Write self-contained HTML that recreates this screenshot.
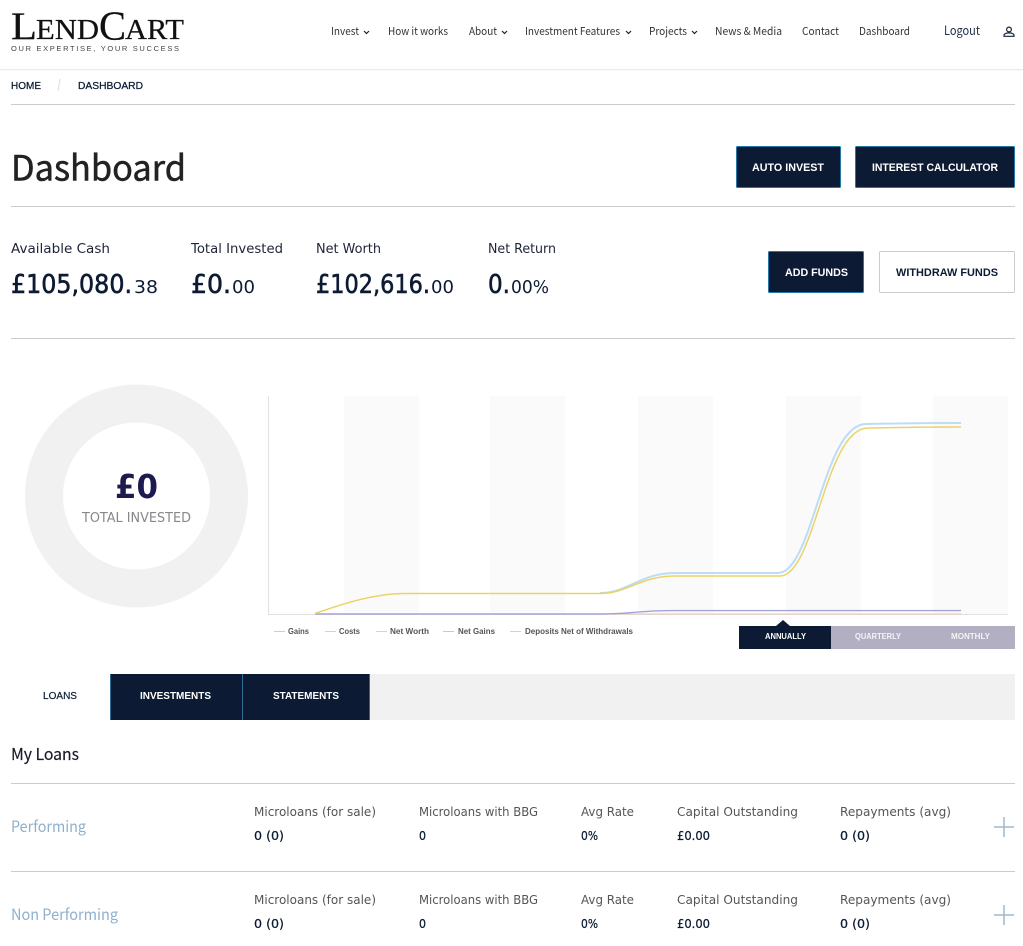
<!DOCTYPE html>
<html lang="en"><head><meta charset="utf-8"><title>Dashboard</title>
<style>
html,body{margin:0;padding:0;background:#fff;width:1023px;height:946px;overflow:hidden}
svg{display:block}
text{font-family:"Liberation Sans",sans-serif;white-space:pre}
.os{font-family:"Noto Sans CJK JP","Liberation Sans",sans-serif}
.pp{font-family:"DejaVu Sans","Liberation Sans",sans-serif}
.nav{font-size:11px;fill:#333;font-family:"Noto Sans CJK JP","Liberation Sans",sans-serif}
.lbl{font-size:13px;fill:#1c2436;font-family:"DejaVu Sans","Liberation Sans",sans-serif}
.val{font-size:26px;fill:#0c1b33;stroke:#0c1b33;stroke-width:.6;font-family:"DejaVu Sans","Liberation Sans",sans-serif}
.sm{font-size:18px;fill:#0c1b33;font-family:"DejaVu Sans","Liberation Sans",sans-serif}
.btn{font-size:11px;font-weight:700;fill:#fff}
.col{font-size:12px;fill:#555;font-family:"DejaVu Sans","Liberation Sans",sans-serif}
.cv{font-size:12px;fill:#0c1b33;stroke:#0c1b33;stroke-width:.25;font-family:"DejaVu Sans","Liberation Sans",sans-serif}
.leg{font-size:8px;fill:#555;font-weight:700}
.perf{font-size:15.5px;fill:#8eb0cc;font-family:"Noto Sans CJK JP","Liberation Sans",sans-serif}
.logo{font-family:"Liberation Serif",serif;fill:#111;stroke:#111;stroke-width:.25}
</style></head><body>
<svg width="1023" height="946" viewBox="0 0 1023 946" xmlns="http://www.w3.org/2000/svg">
<rect width="1023" height="946" fill="#fff"/>
<rect y="69" width="1023" height="1" fill="#ececec"/>
<rect y="70" width="1023" height="1" fill="#f7f7f7"/>

<!-- logo -->
<text class="logo" x="11" y="39" font-size="39" textLength="26" lengthAdjust="spacingAndGlyphs">L</text>
<text class="logo" x="36" y="39" font-size="29" textLength="63" lengthAdjust="spacingAndGlyphs">END</text>
<text class="logo" x="99" y="39.500" font-size="41" textLength="27" lengthAdjust="spacingAndGlyphs">C</text>
<text class="logo" x="125" y="39" font-size="29" textLength="59" lengthAdjust="spacingAndGlyphs">ART</text>
<text x="11" y="51" font-size="7.500" fill="#444" textLength="168" lengthAdjust="spacing">OUR EXPERTISE, YOUR SUCCESS</text>

<!-- nav -->
<text class="nav" x="331" y="35" textLength="28" lengthAdjust="spacingAndGlyphs">Invest</text>
<text class="nav" x="388" y="35" textLength="60" lengthAdjust="spacingAndGlyphs">How it works</text>
<text class="nav" x="469" y="35" textLength="28" lengthAdjust="spacingAndGlyphs">About</text>
<text class="nav" x="525" y="35" textLength="95" lengthAdjust="spacingAndGlyphs">Investment Features</text>
<text class="nav" x="649" y="35" textLength="38" lengthAdjust="spacingAndGlyphs">Projects</text>
<text class="nav" x="715" y="35" textLength="67" lengthAdjust="spacingAndGlyphs">News &amp; Media</text>
<text class="nav" x="802" y="35" textLength="37" lengthAdjust="spacingAndGlyphs">Contact</text>
<text class="nav" x="859" y="35" textLength="51" lengthAdjust="spacingAndGlyphs">Dashboard</text>
<text class="os" x="944" y="35" font-size="12.500" fill="#1f2d45" textLength="36" lengthAdjust="spacingAndGlyphs">Logout</text>
<g fill="none" stroke="#222" stroke-width="1.2">
<path d="M364 31l2.500 2.500 2.500-2.500M502 31l2.500 2.500 2.500-2.500M626 31l2.500 2.500 2.500-2.500M692 31l2.500 2.500 2.500-2.500"/>
</g>
<g fill="none" stroke="#14213a" stroke-width="1.2">
<circle cx="1009" cy="29.500" r="2.400"/>
<path d="M1004 36.300v-1c0-1.600 2.500-2.400 5-2.400s5 .8 5 2.400v1z"/>
</g>

<!-- breadcrumb -->
<text x="11" y="89" font-size="10.500" fill="#0c1b33" stroke="#0c1b33" stroke-width=".25" textLength="30" lengthAdjust="spacingAndGlyphs">HOME</text>
<path d="M60 79l-2 12" stroke="#ddd" fill="none"/>
<text x="78" y="89" font-size="10.500" fill="#0c1b33" stroke="#0c1b33" stroke-width=".25" textLength="65" lengthAdjust="spacingAndGlyphs">DASHBOARD</text>
<rect x="11" y="104" width="1004" height="1" fill="#ccc"/>

<!-- title -->
<text class="os" x="11" y="180.500" font-size="35" fill="#222" stroke="#222" stroke-width=".5" textLength="175" lengthAdjust="spacingAndGlyphs">Dashboard</text>
<rect x="736.500" y="146.500" width="104" height="41" rx="1" fill="#0c1b33" stroke="#2478a8"/>
<text class="btn" x="752" y="171" textLength="72" lengthAdjust="spacingAndGlyphs">AUTO INVEST</text>
<rect x="855.500" y="146.500" width="159" height="41" rx="1" fill="#0c1b33" stroke="#2478a8"/>
<text class="btn" x="872" y="171" textLength="126" lengthAdjust="spacingAndGlyphs">INTEREST CALCULATOR</text>
<rect x="11" y="206" width="1004" height="1" fill="#ccc"/>

<!-- stats -->
<text class="lbl" x="11" y="253" textLength="99" lengthAdjust="spacingAndGlyphs">Available Cash</text>
<text class="lbl" x="191" y="253" textLength="92" lengthAdjust="spacingAndGlyphs">Total Invested</text>
<text class="lbl" x="316" y="253" textLength="65" lengthAdjust="spacingAndGlyphs">Net Worth</text>
<text class="lbl" x="488" y="253" textLength="68" lengthAdjust="spacingAndGlyphs">Net Return</text>
<text class="val" x="11" y="293" textLength="121" lengthAdjust="spacingAndGlyphs">£105,080.</text>
<text class="sm" x="134" y="293" textLength="24" lengthAdjust="spacingAndGlyphs">38</text>
<text class="val" x="191" y="293" textLength="40" lengthAdjust="spacingAndGlyphs">£0.</text>
<text class="sm" x="232" y="293" textLength="23" lengthAdjust="spacingAndGlyphs">00</text>
<text class="val" x="316" y="293" textLength="114" lengthAdjust="spacingAndGlyphs">£102,616.</text>
<text class="sm" x="431" y="293" textLength="23" lengthAdjust="spacingAndGlyphs">00</text>
<text class="val" x="488" y="293" textLength="22" lengthAdjust="spacingAndGlyphs">0.</text>
<text class="sm" x="511" y="293" textLength="38" lengthAdjust="spacingAndGlyphs">00%</text>
<rect x="768.500" y="251.500" width="95" height="41" rx="1" fill="#0c1b33" stroke="#2478a8"/>
<text class="btn" x="785" y="276" textLength="63" lengthAdjust="spacingAndGlyphs">ADD FUNDS</text>
<rect x="879.500" y="251.500" width="135" height="41" rx="1" fill="#fff" stroke="#ccc"/>
<text class="btn" x="896" y="276" style="fill:#0c1b33" textLength="102" lengthAdjust="spacingAndGlyphs">WITHDRAW FUNDS</text>
<rect x="11" y="338" width="1004" height="1" fill="#ccc"/>

<!-- donut -->
<circle cx="136.500" cy="496" r="92.500" fill="none" stroke="#f1f1f1" stroke-width="38"/>
<text class="pp" x="115" y="498" font-size="33" font-weight="700" fill="#1d1a50" textLength="43" lengthAdjust="spacingAndGlyphs">£0</text>
<text class="pp" x="82" y="522" font-size="13" fill="#888" textLength="109" lengthAdjust="spacingAndGlyphs">TOTAL INVESTED</text>

<!-- chart -->
<g fill="#fafafa">
<rect x="344" y="396" width="75" height="218"/>
<rect x="490" y="396" width="75" height="218"/>
<rect x="638" y="396" width="75" height="218"/>
<rect x="786" y="396" width="75" height="218"/>
<rect x="933" y="396" width="75" height="218"/>
</g>
<rect x="268" y="396" width="1" height="219" fill="#e2e2e2"/>
<rect x="268" y="614" width="740" height="1" fill="#e4e0e2"/>
<g fill="none">
<path d="M315 614H961" stroke="#eec4ba" stroke-width="1"/>
<path d="M315 614H600C630 614 640 610.600 672 610.600H961" stroke="#a2a6d6" stroke-width="1.400"/>
<path d="M600 593C628 593 640 573 675 573H778C813 573 823 424 866 424C890 423.500 930 423 961 423" stroke="#bcdcf8" stroke-width="2"/>
<path d="M315 613.500C345 603 375 593.500 405 593.500H600C628 593.500 640 576 675 576H780C815 576 825 428 868 428C890 427.500 930 427 961 427" stroke="#ecd265" stroke-width="1.500"/>
</g>
<g stroke-width="1">
<path d="M274 631.500h11" stroke="#a8e0c8"/>
<path d="M325 631.500h11" stroke="#f5c6b8"/>
<path d="M376 631.500h11" stroke="#bcd9f4"/>
<path d="M443 631.500h11" stroke="#c8c4e8"/>
<path d="M510 631.500h11" stroke="#f1d670"/>
</g>
<text class="leg" x="288" y="634" textLength="21" lengthAdjust="spacingAndGlyphs">Gains</text>
<text class="leg" x="339" y="634" textLength="21" lengthAdjust="spacingAndGlyphs">Costs</text>
<text class="leg" x="390" y="634" textLength="39" lengthAdjust="spacingAndGlyphs">Net Worth</text>
<text class="leg" x="458" y="634" textLength="37" lengthAdjust="spacingAndGlyphs">Net Gains</text>
<text class="leg" x="525" y="634" textLength="108" lengthAdjust="spacingAndGlyphs">Deposits Net of Withdrawals</text>
<rect x="831" y="626" width="184" height="23" fill="#b2afc3"/>
<rect x="739" y="626" width="92" height="23" fill="#0c1b33"/>
<path d="M776 626l7-6 7 6z" fill="#0c1b33"/>
<g font-size="8" font-weight="700" fill="#fff">
<text x="765" y="639" textLength="41" lengthAdjust="spacingAndGlyphs">ANNUALLY</text>
<text x="855" y="639" fill-opacity=".85" textLength="46" lengthAdjust="spacingAndGlyphs">QUARTERLY</text>
<text x="951" y="639" fill-opacity=".85" textLength="39" lengthAdjust="spacingAndGlyphs">MONTHLY</text>
</g>

<!-- tabs -->
<rect x="370" y="674" width="645" height="46" fill="#f1f1f1"/>
<rect x="110" y="674" width="260" height="46" fill="#0c1b33"/>
<rect x="110" y="674" width="1" height="46" fill="#2a6a95"/>
<rect x="242" y="674" width="1" height="46" fill="#2a6a95"/>
<rect x="369" y="674" width="1" height="46" fill="#2a6a95"/>
<text x="43" y="699" font-size="10" fill="#0c1b33" stroke="#0c1b33" stroke-width=".2" textLength="34" lengthAdjust="spacingAndGlyphs">LOANS</text>
<text x="140" y="699" font-size="10" font-weight="700" fill="#fff" textLength="71" lengthAdjust="spacingAndGlyphs">INVESTMENTS</text>
<text x="273" y="699" font-size="10" font-weight="700" fill="#fff" textLength="66" lengthAdjust="spacingAndGlyphs">STATEMENTS</text>

<text class="os" x="11" y="760" font-size="16.500" fill="#1a1a2a" stroke="#1a1a2a" stroke-width=".2" textLength="68" lengthAdjust="spacingAndGlyphs">My Loans</text>
<rect x="11" y="783" width="1004" height="1" fill="#ccc"/>
<rect x="11" y="871" width="1004" height="1" fill="#ccc"/>

<!-- row 1 -->
<text class="perf" x="11" y="832" textLength="75" lengthAdjust="spacingAndGlyphs">Performing</text>
<text class="col" x="254" y="816" textLength="122" lengthAdjust="spacingAndGlyphs">Microloans (for sale)</text>
<text class="col" x="419" y="816" textLength="119" lengthAdjust="spacingAndGlyphs">Microloans with BBG</text>
<text class="col" x="581" y="816" textLength="53" lengthAdjust="spacingAndGlyphs">Avg Rate</text>
<text class="col" x="677" y="816" textLength="121" lengthAdjust="spacingAndGlyphs">Capital Outstanding</text>
<text class="col" x="840" y="816" textLength="111" lengthAdjust="spacingAndGlyphs">Repayments (avg)</text>
<text class="cv" x="254" y="840" textLength="30" lengthAdjust="spacingAndGlyphs">0 (0)</text>
<text class="cv" x="419" y="840" textLength="7" lengthAdjust="spacingAndGlyphs">0</text>
<text class="cv" x="581" y="840" textLength="17" lengthAdjust="spacingAndGlyphs">0%</text>
<text class="cv" x="677" y="840" textLength="33" lengthAdjust="spacingAndGlyphs">£0.00</text>
<text class="cv" x="840" y="840" textLength="30" lengthAdjust="spacingAndGlyphs">0 (0)</text>
<path d="M994 827h20M1004 817v20" stroke="#9fb9d0" stroke-width="1.500" fill="none"/>

<!-- row 2 -->
<text class="perf" x="11" y="920" textLength="107" lengthAdjust="spacingAndGlyphs">Non Performing</text>
<text class="col" x="254" y="904" textLength="122" lengthAdjust="spacingAndGlyphs">Microloans (for sale)</text>
<text class="col" x="419" y="904" textLength="119" lengthAdjust="spacingAndGlyphs">Microloans with BBG</text>
<text class="col" x="581" y="904" textLength="53" lengthAdjust="spacingAndGlyphs">Avg Rate</text>
<text class="col" x="677" y="904" textLength="121" lengthAdjust="spacingAndGlyphs">Capital Outstanding</text>
<text class="col" x="840" y="904" textLength="111" lengthAdjust="spacingAndGlyphs">Repayments (avg)</text>
<text class="cv" x="254" y="928" textLength="30" lengthAdjust="spacingAndGlyphs">0 (0)</text>
<text class="cv" x="419" y="928" textLength="7" lengthAdjust="spacingAndGlyphs">0</text>
<text class="cv" x="581" y="928" textLength="17" lengthAdjust="spacingAndGlyphs">0%</text>
<text class="cv" x="677" y="928" textLength="33" lengthAdjust="spacingAndGlyphs">£0.00</text>
<text class="cv" x="840" y="928" textLength="30" lengthAdjust="spacingAndGlyphs">0 (0)</text>
<path d="M994 915h20M1004 905v20" stroke="#9fb9d0" stroke-width="1.500" fill="none"/>
</svg>
</body></html>
